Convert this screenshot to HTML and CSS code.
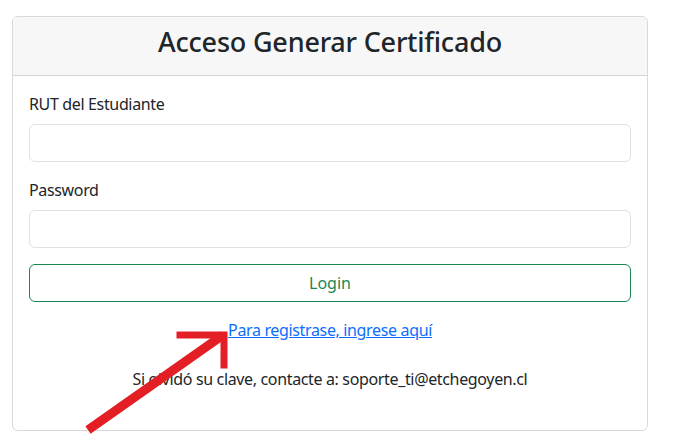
FILE: index.html
```html
<!DOCTYPE html>
<html lang="es">
<head>
<meta charset="utf-8">
<title>Acceso Generar Certificado</title>
<link rel="stylesheet" href="styles.css">
</head>
<body>
<div class="page">
  <div class="card">
    <div class="card-header">
      <h2 class="title">Acceso Generar Certificado</h2>
    </div>
    <div class="card-body">
      <form class="form">
        <div class="field">
          <label class="label" for="rut">RUT del Estudiante</label>
          <input class="input" id="rut" type="text">
        </div>
        <div class="field">
          <label class="label" for="pw">Password</label>
          <input class="input" id="pw" type="password">
        </div>
        <button class="btn-login" type="button">Login</button>
      </form>
      <p class="register"><a href="#" class="link">Para registrase, ingrese aquí</a></p>
      <p class="support">Si olvidó su clave, contacte a: soporte_ti@etchegoyen.cl</p>
    </div>
  </div>
  <svg class="arrow" width="160" height="120" viewBox="0 0 160 120" aria-hidden="true">
    <path d="M6 116 L141 21" stroke="#e31e24" stroke-width="9" fill="none"/>
    <path d="M98 21 H142 V51" stroke="#e31e24" stroke-width="7" fill="none" stroke-linecap="square"/>
  </svg>
</div>
</body>
</html>
```
FILE: styles.css
```css
* { box-sizing: border-box; }
html, body { margin: 0; padding: 0; background: #fff; }
body {
  font-family: "Segoe UI", "Noto Sans", "Liberation Sans", sans-serif;
  font-size: 16px;
  line-height: 1.5;
  color: #212529;
  letter-spacing: -0.35px;
}
.page {
  position: relative;
  padding: 16px 0 0 12px;
  width: 675px;
  height: 445px;
  overflow: hidden;
}
.card {
  width: 636px;
  border: 1px solid #d9d9d9;
  border-radius: 6px;
  background: #fff;
}
.card-header {
  background: #f7f7f7;
  border-bottom: 1px solid #d4d4d4;
  border-radius: 5px 5px 0 0;
  padding: 9px 16px 8px;
  text-align: center;
}
.title {
  margin: 0 0 9px;
  font-size: 27px;
  font-weight: 500;
  line-height: 1.2;
  color: #212529;
  letter-spacing: -0.2px;
}
.card-body { padding: 16px 16px 23px; }
.form { display: flex; flex-direction: column; }
.field { display: flex; flex-direction: column; margin-bottom: 16px; }
.label { margin-bottom: 8px; }
.input {
  height: 38px;
  border: 1px solid #dee2e6;
  border-radius: 6px;
  background: #fff;
  font: inherit;
  padding: 6px 12px;
}
.btn-login {
  height: 38px;
  border: 1px solid #198754;
  border-radius: 6px;
  background: #fff;
  color: #198754;
  font: inherit;
  cursor: pointer;
}
.register { margin: 16px 0 25px; text-align: center; }
.link { color: #0d6efd; text-decoration: underline; }
.support { margin: 0 0 16px; text-align: center; }
.arrow {
  position: absolute;
  left: 82px;
  top: 314px;
}
```
